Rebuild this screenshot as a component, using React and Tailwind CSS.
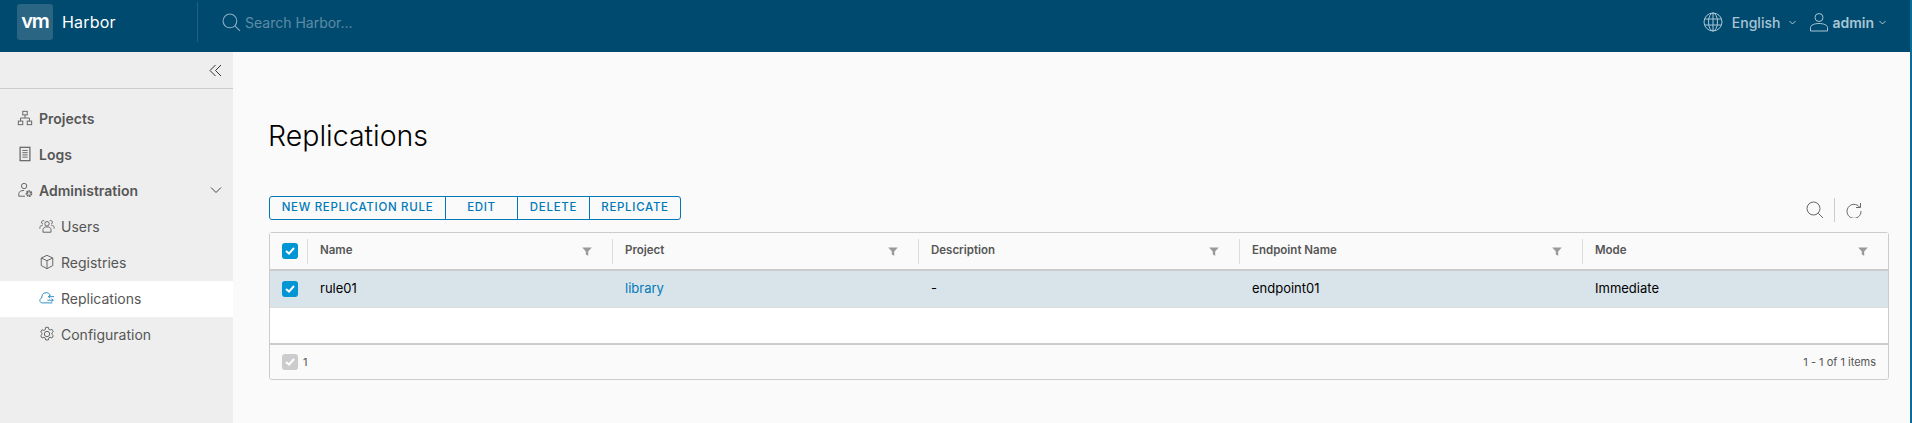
import React from 'react';

const font = "font-['Inter','Liberation_Sans',sans-serif]";

const Ico = ({ className, children, size = 16, sw = 1.1 }) => (
  <svg className={`shrink-0 ${className}`} width={size} height={size} viewBox="0 0 18 18" fill="none" stroke="currentColor" strokeWidth={sw}>
    {children}
  </svg>
);

const SearchIcon = ({ className, size = 18 }) => (
  <Ico className={className} size={size} sw={1}>
    <circle cx="7.5" cy="7.5" r="6.5" />
    <path d="M12.3 12.3L17 17" />
  </Ico>
);

const Filter = () => (
  <svg className="shrink-0" width="12" height="12" viewBox="0 0 10 10" fill="#9a9a9a">
    <path d="M1 2h8L6 5.5V9L4 8V5.5z" />
  </svg>
);

const Checkbox = ({ disabled }) => (
  <div className={`w-4 h-4 rounded-[3px] flex items-center justify-center shrink-0 ${disabled ? 'bg-[#cccccc]' : 'bg-[#0095d3]'}`}>
    <svg width="10" height="8" viewBox="0 0 10 8" fill="none" stroke="#ffffff" strokeWidth="2">
      <path d="M1 4l3 2.6L9 1" />
    </svg>
  </div>
);

const mainNav = [
  {
    label: 'Projects',
    icon: (
      <Ico className="text-[#666]">
        <rect x="6.5" y="1.5" width="5" height="4" />
        <rect x="1.5" y="12.5" width="5" height="4" />
        <rect x="11.5" y="12.5" width="5" height="4" />
        <path d="M9 5.5V9M4 12.5V9h10v3.500" />
      </Ico>
    ),
  },
  {
    label: 'Logs',
    icon: (
      <Ico className="text-[#666]">
        <rect x="3.500" y="1.500" width="11" height="15" strokeWidth="1.400" />
        <path d="M6 5h6M6 7.500h6M6 10h6M6 12.500h6" />
      </Ico>
    ),
  },
];

const subNav = [
  {
    label: 'Users',
    icon: (
      <Ico className="text-[#666]">
        <circle cx="9" cy="6.500" r="2.500" />
        <path d="M4.500 16v-3c0-2 2-3 4.500-3s4.500 1 4.500 3v3z" />
        <path d="M6 3.200A2 2 0 0 0 3 5.500c.2.800.8 1.300 1.500 1.500M1 12v-1.500C1 9 2.300 8.500 4 8.500M12 3.200a2 2 0 0 1 3 2.300c-.2.800-.8 1.300-1.500 1.500M17 12v-1.500C17 9 15.700 8.500 14 8.500" />
      </Ico>
    ),
  },
  {
    label: 'Registries',
    icon: (
      <Ico className="text-[#666]">
        <path d="M9 1.500l6.500 3v8.500L9 16.500 2.500 13V4.500z" />
        <path d="M2.500 4.500L9 7.500l6.500-3M9 7.500v9" />
      </Ico>
    ),
  },
  {
    label: 'Replications',
    active: true,
    icon: (
      <Ico className="text-[#2f8fc4]">
        <path d="M15 14.500H3.500c-3.300-.3-3.300-4.700-.5-5.500 0-3 1.500-6 5-6 2.500 0 4 1.300 4.800 3.200" />
        <path d="M17 7.500H10.500M12.500 5.800l-2 1.700 2 1.700M9.500 11.500H16M14 9.800l2 1.700-2 1.700" />
      </Ico>
    ),
  },
  {
    label: 'Configuration',
    icon: (
      <Ico className="text-[#666]">
        <circle cx="9" cy="9" r="3" />
        <path d="M7.500 1.500h3l.5 2.200 1.500.8 2.100-.8 1.500 2.600-1.600 1.500v1.600l1.600 1.500-1.500 2.600-2.100-.8-1.500.8-.5 2.200h-3L7 13.500l-1.500-.8-2.100.8-1.500-2.600 1.600-1.500V8.300L1.900 6.800l1.500-2.600 2.100.8L7 4.200z" />
      </Ico>
    ),
  },
];

const columns = [
  { label: 'Name', width: 'w-[305px]' },
  { label: 'Project', width: 'w-[306px]' },
  { label: 'Description', width: 'w-[321px]' },
  { label: 'Endpoint Name', width: 'w-[343px]' },
  { label: 'Mode', width: 'flex-1' },
];

const row = [
  { text: 'rule01', width: 'w-[305px]', color: 'text-[#000000]' },
  { text: 'library', width: 'w-[306px]', color: 'text-[#0079b8]' },
  { text: '-', width: 'w-[321px]', color: 'text-[#000000]' },
  { text: 'endpoint01', width: 'w-[343px]', color: 'text-[#000000]' },
  { text: 'Immediate', width: 'flex-1', color: 'text-[#000000]' },
];

const Header = () => (
  <header className="h-[52px] shrink-0 bg-[#004a70] flex items-center pb-2 text-white">
    <div className="w-[198px] h-[40px] flex items-center pl-[17px] border-r border-[#1f6184]">
      <div className="w-9 h-9 rounded-[3px] bg-[#2a6584] flex items-center justify-center text-[20px] font-semibold leading-none tracking-[-1px] pb-[3px]">vm</div>
      <span className="ml-[9px] text-[16px] tracking-[0.200px]">Harbor</span>
    </div>
    <div className="flex items-center ml-6 text-[#8eb1c4]">
      <SearchIcon size={19} />
      <span className="ml-[4px] text-[14px] text-[#5f8ca5]">Search Harbor...</span>
    </div>
    <div className="ml-auto flex items-center pr-6 text-[#a9c5d4]">
      <svg width="20" height="20" viewBox="0 0 20 20" fill="none" stroke="currentColor">
        <circle cx="10" cy="10" r="9" />
        <ellipse cx="10" cy="10" rx="4.500" ry="9" />
        <path d="M10 1v18M1.500 7h17M1.500 13h17" />
      </svg>
      <span className="ml-[9px] text-[14px] font-medium">English</span>
      <svg className="ml-[9px]" width="7" height="5" viewBox="0 0 7 5" fill="none" stroke="currentColor"><path d="M.5 1l3 3 3-3" /></svg>
      <svg className="ml-[13px]" width="20" height="20" viewBox="0 0 20 20" fill="none" stroke="currentColor">
        <circle cx="10" cy="5.500" r="4" />
        <path d="M1.500 19v-3.500c0-2.500 4-4 8.500-4s8.500 1.500 8.500 4V19z" />
      </svg>
      <span className="ml-[3px] text-[14px] font-semibold">admin</span>
      <svg className="ml-[5px]" width="7" height="5" viewBox="0 0 7 5" fill="none" stroke="currentColor"><path d="M.5 1l3 3 3-3" /></svg>
    </div>
  </header>
);

const Sidebar = () => (
  <aside className="w-[233px] shrink-0 bg-[#eeeeee]">
    <div className="h-[37px] border-b border-[#cccccc] flex items-center justify-end pr-[11px] text-[#333]">
      <svg width="13" height="13" viewBox="0 0 13 13" fill="none" stroke="currentColor">
        <path d="M6.500 1L1 6.500 6.500 12M12 1L6.500 6.500 12 12" />
      </svg>
    </div>
    <nav className="pt-3">
      {mainNav.map((item) => (
        <div key={item.label} className="h-9 flex items-center pl-[17px] pb-[2px] gap-[6px] text-[14px] font-semibold text-[#565656]">
          {item.icon}
          {item.label}
        </div>
      ))}
      <div className="h-9 flex items-center pl-[17px] pb-[2px] gap-[6px] text-[14px] font-semibold text-[#565656]">
        <Ico className="text-[#666]">
          <circle cx="8" cy="4.500" r="3" />
          <path d="M2 16v-3c0-2 2.500-3.500 6-3.500" />
          <path d="M2 16h7" />
          <circle cx="13.500" cy="13" r="2.500" strokeWidth="2.500" strokeDasharray="1.500 .5" />
        </Ico>
        Administration
        <svg className="ml-auto mr-[11px] text-[#444]" width="12" height="8" viewBox="0 0 12 8" fill="none" stroke="currentColor">
          <path d="M1 1.500l5 5 5-5" />
        </svg>
      </div>
      {subNav.map((item) => (
        <div key={item.label} className={`h-9 flex items-center pl-[39px] pb-[2px] gap-[6px] text-[14px] text-[#565656] ${item.active ? 'bg-white' : ''}`}>
          {item.icon}
          {item.label}
        </div>
      ))}
    </nav>
  </aside>
);

const Grid = () => (
  <div className="mt-[9px] bg-white border border-[#cccccc] rounded-[3px] w-[1620px]">
    <div className="h-[38px] bg-[#fafafa] border-b-2 border-[#cccccc] flex items-center">
      <div className="w-[38px] h-[25px] pl-[12px] flex items-center border-r border-[#dddddd] shrink-0"><Checkbox /></div>
      {columns.map((col) => (
        <div key={col.label} className={`${col.width} h-[25px] pl-[12px] pr-[19px] flex items-center justify-between border-r border-[#dddddd] last:border-r-0 text-[11.500px] font-semibold text-[#565656]`}>
          {col.label}
          <Filter />
        </div>
      ))}
    </div>
    <div className="h-[37px] bg-[#d9e4ea] flex items-center border-b border-[#dddddd]">
      <div className="w-[38px] pl-[12px] flex items-center shrink-0"><Checkbox /></div>
      {row.map((cell) => (
        <div key={cell.text} className={`${cell.width} pl-[12px] text-[13px] ${cell.color}`}>{cell.text}</div>
      ))}
    </div>
    <div className="h-[37px] border-b-2 border-[#cccccc]" />
    <div className="h-[34px] bg-[#fafafa] rounded-b-[3px] flex items-center pl-[12px] pr-[12px] text-[11px] text-[#565656]">
      <Checkbox disabled />
      <span className="ml-[5px]">1</span>
      <span className="ml-auto">1 - 1 of 1 items</span>
    </div>
  </div>
);

const App = () => (
  <div className={`${font} w-full h-[423px] flex overflow-hidden bg-[#fafafa]`}>
    <div className="flex-1 flex flex-col min-w-0">
      <Header />
      <div className="flex flex-1 min-h-0">
        <Sidebar />
        <main className="flex-1 pl-9 pt-[68px]">
          <h1 className="-ml-px text-[28.500px] leading-[32px] font-light text-black">Replications</h1>
          <div className="mt-[44px] h-[27px] flex items-start justify-between w-[1620px]">
            <div className="flex h-6 border border-[#0079b8] rounded-[3px] text-[#0079b8] text-[11.500px] font-medium tracking-[0.7px] divide-x divide-[#0079b8]">
              <button className="w-[176px] flex items-center justify-center">NEW REPLICATION RULE</button>
              <button className="w-[72px] flex items-center justify-center">EDIT</button>
              <button className="w-[72px] flex items-center justify-center">DELETE</button>
              <button className="w-[90px] flex items-center justify-center">REPLICATE</button>
            </div>
            <div className="mt-[2px] flex items-center text-[#666] pr-[27px]">
              <SearchIcon size={18} />
              <div className="w-px h-6 bg-[#cccccc] ml-[10px] mr-[11px]" />
              <svg width="16" height="16" viewBox="0 0 16 16" fill="none" stroke="currentColor">
                <path d="M13.500 5A7 7 0 1 0 15 9M14.500 1v4.500H10" />
              </svg>
            </div>
          </div>
          <Grid />
        </main>
      </div>
    </div>
    <div className="w-[2px] shrink-0 bg-[#0a6c98]" />
  </div>
);

export default App;
